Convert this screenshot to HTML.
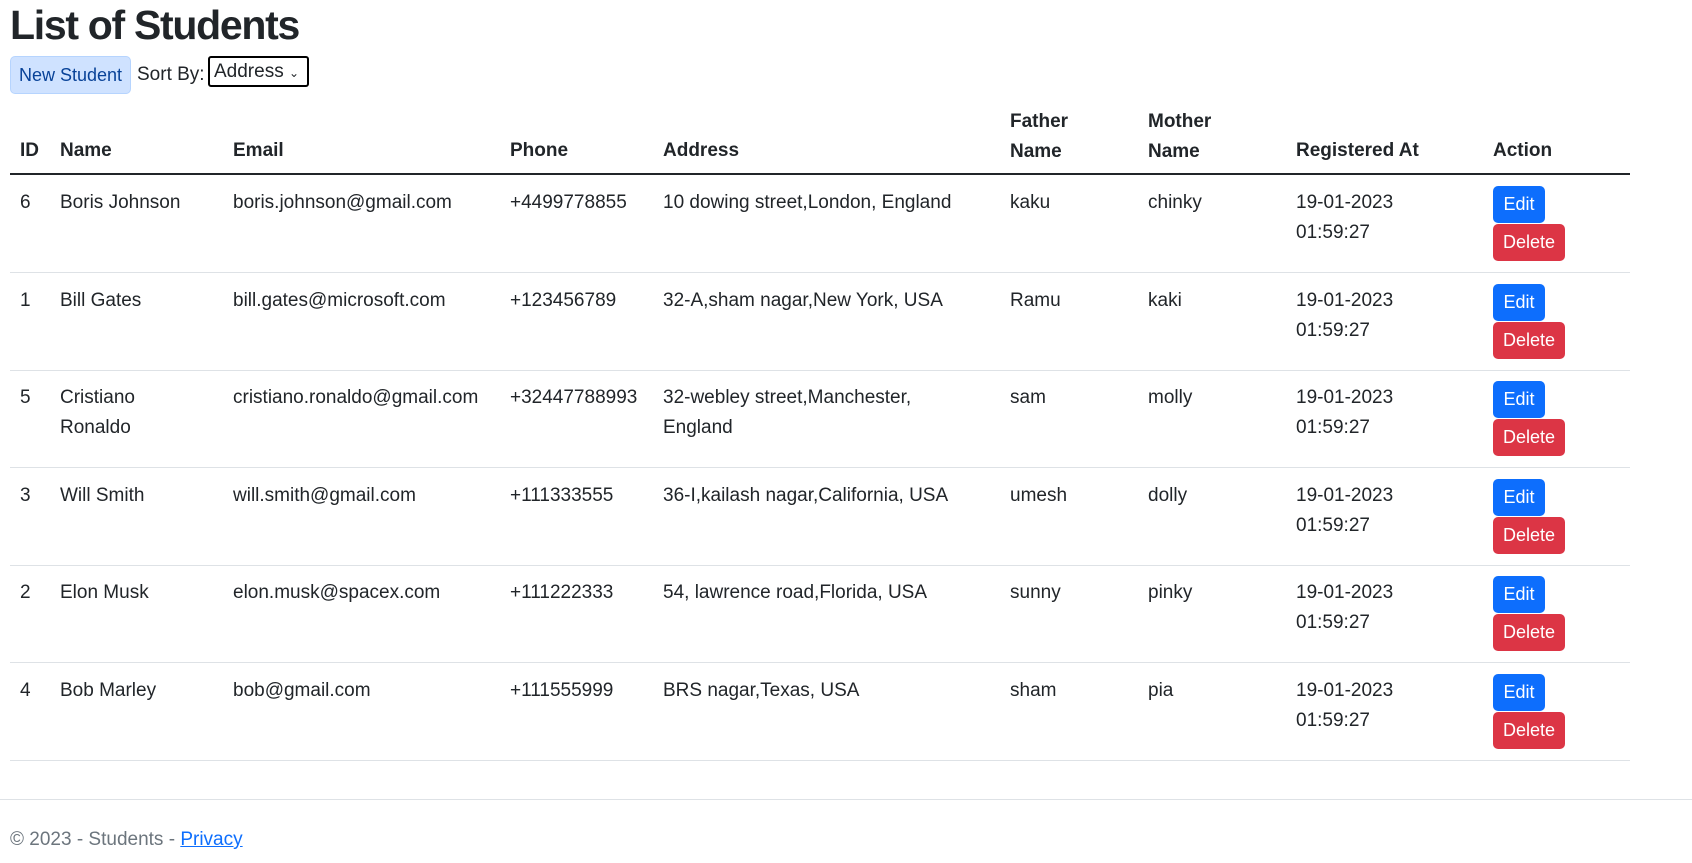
<!DOCTYPE html>
<html><head><meta charset="utf-8"><style>
*{box-sizing:border-box;margin:0;padding:0}
body{width:1692px;height:863px;font-family:"Liberation Sans",Arial,sans-serif;color:#212529;background:#fff;position:relative;overflow:hidden;font-size:19px}
.a{position:absolute;white-space:nowrap}
h1{position:absolute;left:10px;top:0;font-size:41px;font-weight:bold;line-height:50px;letter-spacing:-1.3px}
.btn{position:absolute;border-radius:5px;color:#fff;font-size:18px;text-align:center}
.hd{font-weight:bold}
.line{position:absolute;left:10px;width:1620px;height:1px;background:#dee2e6}
</style></head><body>
<h1>List of Students</h1>
<div class="btn" style="left:10px;top:56px;width:121px;height:38px;background:#cfe2ff;border:1px solid #b6d4fe;color:#084298;line-height:36px">New Student</div>
<div class="a" style="left:137px;top:62px;line-height:26px">Sort By:</div>
<div class="a" style="left:208px;top:56px;width:101px;height:31px;border:2px solid #000;border-radius:3px;padding-left:4px;line-height:27px">Address <span style="font-size:12px">&#8964;</span></div>

<div class="a hd" style="left:20px;top:140px">ID</div>
<div class="a hd" style="left:60px;top:140px">Name</div>
<div class="a hd" style="left:233px;top:140px">Email</div>
<div class="a hd" style="left:510px;top:140px">Phone</div>
<div class="a hd" style="left:663px;top:140px">Address</div>
<div class="a hd" style="left:1010px;top:107px;line-height:30px">Father<br>Name</div>
<div class="a hd" style="left:1148px;top:107px;line-height:30px">Mother<br>Name</div>
<div class="a hd" style="left:1296px;top:140px">Registered At</div>
<div class="a hd" style="left:1493px;top:140px">Action</div>
<div class="line" style="top:173px;height:2px;background:#212529"></div>

<div id="rows"></div>
<script>
var d=[["6","Boris Johnson","boris.johnson@gmail.com","+4499778855","10 dowing street,London, England","kaku","chinky"],
["1","Bill Gates","bill.gates@microsoft.com","+123456789","32-A,sham nagar,New York, USA","Ramu","kaki"],
["5","Cristiano<br>Ronaldo","cristiano.ronaldo@gmail.com","+32447788993","32-webley street,Manchester,<br>England","sam","molly"],
["3","Will Smith","will.smith@gmail.com","+111333555","36-I,kailash nagar,California, USA","umesh","dolly"],
["2","Elon Musk","elon.musk@spacex.com","+111222333","54, lawrence road,Florida, USA","sunny","pinky"],
["4","Bob Marley","bob@gmail.com","+111555999","BRS nagar,Texas, USA","sham","pia"]];
var xs=[20,60,233,510,663,1010,1148],h="";
d.forEach(function(r,i){var t=175+i*97.5;
r.forEach(function(c,j){h+='<div class="a" style="left:'+xs[j]+'px;top:'+(t+13)+'px;line-height:30px">'+c+'</div>'});
h+='<div class="a" style="left:1296px;top:'+(t+13)+'px;line-height:30px">19-01-2023<br>01:59:27</div>';
h+='<div class="btn" style="left:1493px;top:'+(t+11)+'px;width:52px;height:37px;line-height:37px;background:#0d6efd">Edit</div>';
h+='<div class="btn" style="left:1493px;top:'+(t+49)+'px;width:72px;height:37px;line-height:37px;background:#dc3545">Delete</div>';
h+='<div class="line" style="top:'+(t+97)+'px"></div>';});
document.getElementById("rows").innerHTML=h;
</script>
<div style="position:absolute;left:0;top:799px;width:1692px;height:1px;background:#dee2e6"></div>
<div class="a" style="left:10px;top:829px;color:#6c757d">© 2023 - Students - <span style="color:#0d6efd;text-decoration:underline">Privacy</span></div>
</body></html>
